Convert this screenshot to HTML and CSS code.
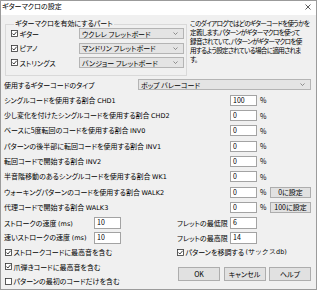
FILE: index.html
```html
<!DOCTYPE html>
<html lang="ja">
<head>
<meta charset="utf-8">
<title>ギターマクロの設定</title>
<link rel="stylesheet" href="styles.css">
</head>
<body>
<div class="window">
  <div class="titlebar">
    <span class="title">ギターマクロの設定</span>
    <svg class="close" width="6" height="6" viewBox="0 0 6 6"><path d="M0.5 0.5 L5.5 5.5 M5.5 0.5 L0.5 5.5" stroke="#333" stroke-width="0.8" fill="none"/></svg>
  </div>
  <div class="body">
    <div class="top">
      <div class="group">
        <div class="group-title">ギターマクロを有効にするパート</div>
        <div class="group-rows">
          <div class="grow">
            <span class="check"><svg class="box" width="7" height="7" viewBox="0 0 7 7"><rect x="0.5" y="0.5" width="6" height="6" fill="#fff" stroke="#333" stroke-width="0.8"/><path d="M1.4 3.5 L2.9 5 L5.6 1.8" stroke="#222" stroke-width="0.9" fill="none"/></svg>ギター</span>
            <div class="combo"><span>ウクレレ フレットボード</span><svg class="chev" width="5" height="3" viewBox="0 0 5 3"><path d="M0.5 0.5 L2.5 2.5 L4.5 0.5" stroke="#666" stroke-width="0.7" fill="none"/></svg></div>
          </div>
          <div class="grow">
            <span class="check"><svg class="box" width="7" height="7" viewBox="0 0 7 7"><rect x="0.5" y="0.5" width="6" height="6" fill="#fff" stroke="#333" stroke-width="0.8"/><path d="M1.4 3.5 L2.9 5 L5.6 1.8" stroke="#222" stroke-width="0.9" fill="none"/></svg>ピアノ</span>
            <div class="combo"><span>マンドリン フレットボード</span><svg class="chev" width="5" height="3" viewBox="0 0 5 3"><path d="M0.5 0.5 L2.5 2.5 L4.5 0.5" stroke="#666" stroke-width="0.7" fill="none"/></svg></div>
          </div>
          <div class="grow">
            <span class="check"><svg class="box" width="7" height="7" viewBox="0 0 7 7"><rect x="0.5" y="0.5" width="6" height="6" fill="#fff" stroke="#333" stroke-width="0.8"/><path d="M1.4 3.5 L2.9 5 L5.6 1.8" stroke="#222" stroke-width="0.9" fill="none"/></svg>ストリングス</span>
            <div class="combo"><span>バンジョー フレットボード</span><svg class="chev" width="5" height="3" viewBox="0 0 5 3"><path d="M0.5 0.5 L2.5 2.5 L4.5 0.5" stroke="#666" stroke-width="0.7" fill="none"/></svg></div>
          </div>
        </div>
      </div>
      <div class="desc">
        <div>このダイアログではどのギターコードを使うかを</div>
        <div>定義します。パターンがギターマクロを使って</div>
        <div>録音されていて、パターンがギターマクロを使</div>
        <div>用するよう設定されている場合に適用されま</div>
        <div>す。</div>
      </div>
    </div>

    <div class="grid">
      <div class="lbl">使用するギターコードのタイプ</div>
      <div class="combo wide"><span>ポップ バレーコード</span><svg class="chev" width="5" height="3" viewBox="0 0 5 3"><path d="M0.5 0.5 L2.5 2.5 L4.5 0.5" stroke="#666" stroke-width="0.7" fill="none"/></svg></div>

      <div class="lbl span">シングルコードを使用する割合 <span class="lat">CHD1</span></div>
      <div class="input">100</div><div class="pct">%</div>

      <div class="lbl span">少し変化を付けたシングルコードを使用する割合 <span class="lat">CHD2</span></div>
      <div class="input">0</div><div class="pct">%</div>

      <div class="lbl span">ベースに5度転回のコードを使用する割合 <span class="lat">INV0</span></div>
      <div class="input">0</div><div class="pct">%</div>

      <div class="lbl span">パターンの後半部に転回コードを使用する割合 <span class="lat">INV1</span></div>
      <div class="input">0</div><div class="pct">%</div>

      <div class="lbl span">転回コードで開始する割合 <span class="lat">INV2</span></div>
      <div class="input">0</div><div class="pct">%</div>

      <div class="lbl span">半音階移動のあるシングルコードを使用する割合 <span class="lat">WK1</span></div>
      <div class="input">0</div><div class="pct">%</div>

      <div class="lbl span">ウォーキングパターンのコードを使用する割合 <span class="lat">WALK2</span></div>
      <div class="input">0</div><div class="pct">%</div><div class="btn small">0に設定</div>

      <div class="lbl span">代理コードで開始する割合 <span class="lat">WALK3</span></div>
      <div class="input">0</div><div class="pct">%</div><div class="btn small">100に設定</div>
    </div>

    <div class="bottom">
      <div class="lbl l-lbl r1">ストロークの速度 <span class="lat">(ms)</span></div>
      <div class="input b-in r1">10</div>
      <div class="lbl r-lbl r1">フレットの最低限</div>
      <div class="input r-in r1">6</div>

      <div class="lbl l-lbl r2">速いストロークの速度 <span class="lat">(ms)</span></div>
      <div class="input b-in r2">10</div>
      <div class="lbl r-lbl r2">フレットの最高限</div>
      <div class="input r-in r2">14</div>

      <span class="check left r3"><svg class="box" width="7" height="7" viewBox="0 0 7 7"><rect x="0.5" y="0.5" width="6" height="6" fill="#fff" stroke="#333" stroke-width="0.8"/><path d="M1.4 3.5 L2.9 5 L5.6 1.8" stroke="#222" stroke-width="0.9" fill="none"/></svg>ストロークコードに最高音を含む</span>
      <span class="check right r3"><svg class="box" width="7" height="7" viewBox="0 0 7 7"><rect x="0.5" y="0.5" width="6" height="6" fill="#fff" stroke="#333" stroke-width="0.8"/><path d="M1.4 3.5 L2.9 5 L5.6 1.8" stroke="#222" stroke-width="0.9" fill="none"/></svg>パターンを移調する <span class="lat">(サックスdb)</span></span>

      <span class="check left r4"><svg class="box" width="7" height="7" viewBox="0 0 7 7"><rect x="0.5" y="0.5" width="6" height="6" fill="#fff" stroke="#333" stroke-width="0.8"/><path d="M1.4 3.5 L2.9 5 L5.6 1.8" stroke="#222" stroke-width="0.9" fill="none"/></svg>爪弾きコードに最高音を含む</span>
      <div class="buttons">
        <div class="btn big">OK</div>
        <div class="btn big">キャンセル</div>
        <div class="btn big">ヘルプ</div>
      </div>

      <span class="check left r5"><svg class="box" width="7" height="7" viewBox="0 0 7 7"><rect x="0.5" y="0.5" width="6" height="6" fill="#fff" stroke="#333" stroke-width="0.8"/></svg>パターンの最初のコードだけを含む</span>
    </div>
  </div>
</div>
</body>
</html>
```

FILE: styles.css
```css
body {
  margin: 0;
  font-family: "Noto Sans CJK JP", "Noto Sans", sans-serif;
  font-size: 7px;
  line-height: 10px;
  color: #000;
  font-feature-settings: "palt";
}

.window {
  width: 317px;
  height: 290px;
  box-sizing: border-box;
  border: 1px solid #9b9b9b;
  background: #f0f0f0;
  overflow: hidden;
}

.titlebar {
  height: 14px;
  background: #fff;
  display: flex;
  justify-content: space-between;
  align-items: flex-start;
  padding-left: 1px;
}

.title {
  line-height: 10px;
}

.close {
  margin: 2.5px 5px 0 0;
}

.body {
  padding: 0 5px 0 3px;
}

.top {
  display: flex;
  align-items: flex-start;
}

.group {
  margin: 9px 0 0 1px;
  width: 182px;
  height: 52px;
  box-sizing: border-box;
  border: 1px solid #d9d9d9;
  padding: 0 2px 0 5px;
  flex: none;
}

.group-title {
  width: max-content;
  height: 10px;
  margin: -7px 0 0 3px;
  padding: 0 1px;
  background: #f0f0f0;
}

.group-rows {
  display: flex;
  flex-direction: column;
  gap: 3.5px;
}

.grow {
  display: grid;
  grid-template-columns: 68px 105px;
  align-items: center;
  height: 11px;
}

.check {
  display: flex;
  align-items: center;
  gap: 1.5px;
  white-space: nowrap;
}

.box {
  flex: none;
}

.combo {
  height: 11px;
  box-sizing: border-box;
  border: 1px solid #b4b4b4;
  background: #e4e4e4;
  display: flex;
  align-items: center;
  justify-content: space-between;
  padding: 0 5px 0 2px;
  white-space: nowrap;
}

.desc {
  margin: 3.5px 0 0 3px;
  font-size: 6.6px;
  line-height: 9px;
  white-space: nowrap;
  letter-spacing: -0.7px;
}

.grid {
  margin-top: 1.35px;
  display: grid;
  grid-template-columns: 134px 92px 27px 13px 41px;
  grid-auto-rows: 15.3px;
  align-items: center;
}

.lbl {
  white-space: nowrap;
}

.lbl.span {
  grid-column: 1 / 3;
}

.lat {
  font-family: "DejaVu Sans", sans-serif;
  font-size: 6.5px;
  letter-spacing: 0;
}

.combo.wide {
  grid-column: 2 / 6;
}

.input {
  height: 11px;
  box-sizing: border-box;
  border: 1px solid #a3a3a3;
  background: #fff;
  padding-left: 2px;
  line-height: 9px;
}

.pct {
  padding-left: 3px;
}

.btn {
  box-sizing: border-box;
  border: 1px solid #adadad;
  background: #e1e1e1;
  display: flex;
  align-items: center;
  justify-content: center;
  white-space: nowrap;
}

.btn.small {
  height: 11px;
}

.bottom {
  margin-top: 1.2px;
  display: grid;
  grid-template-columns: 90px 27px 56px 53px 27px 54px;
  grid-template-rows: repeat(5, 14.5px);
  align-items: center;
}

.r1 { grid-row: 1; }
.r2 { grid-row: 2; }
.r3 { grid-row: 3; }
.r4 { grid-row: 4; }
.r5 { grid-row: 5; }

.l-lbl {
  grid-column: 1;
}

.b-in {
  grid-column: 2;
  height: 12px;
}

.r-lbl {
  grid-column: 4;
}

.r-in {
  grid-column: 5;
  height: 12px;
}

.check.left {
  grid-column: 1 / 4;
  margin-left: 1px;
}

.check.right {
  grid-column: 4 / 7;
}

.buttons {
  grid-column: 4 / 7;
  grid-row: 4 / 6;
  display: flex;
  gap: 3.5px;
  margin-left: 1px;
}

.btn.big {
  width: 42px;
  height: 14px;
}
```
